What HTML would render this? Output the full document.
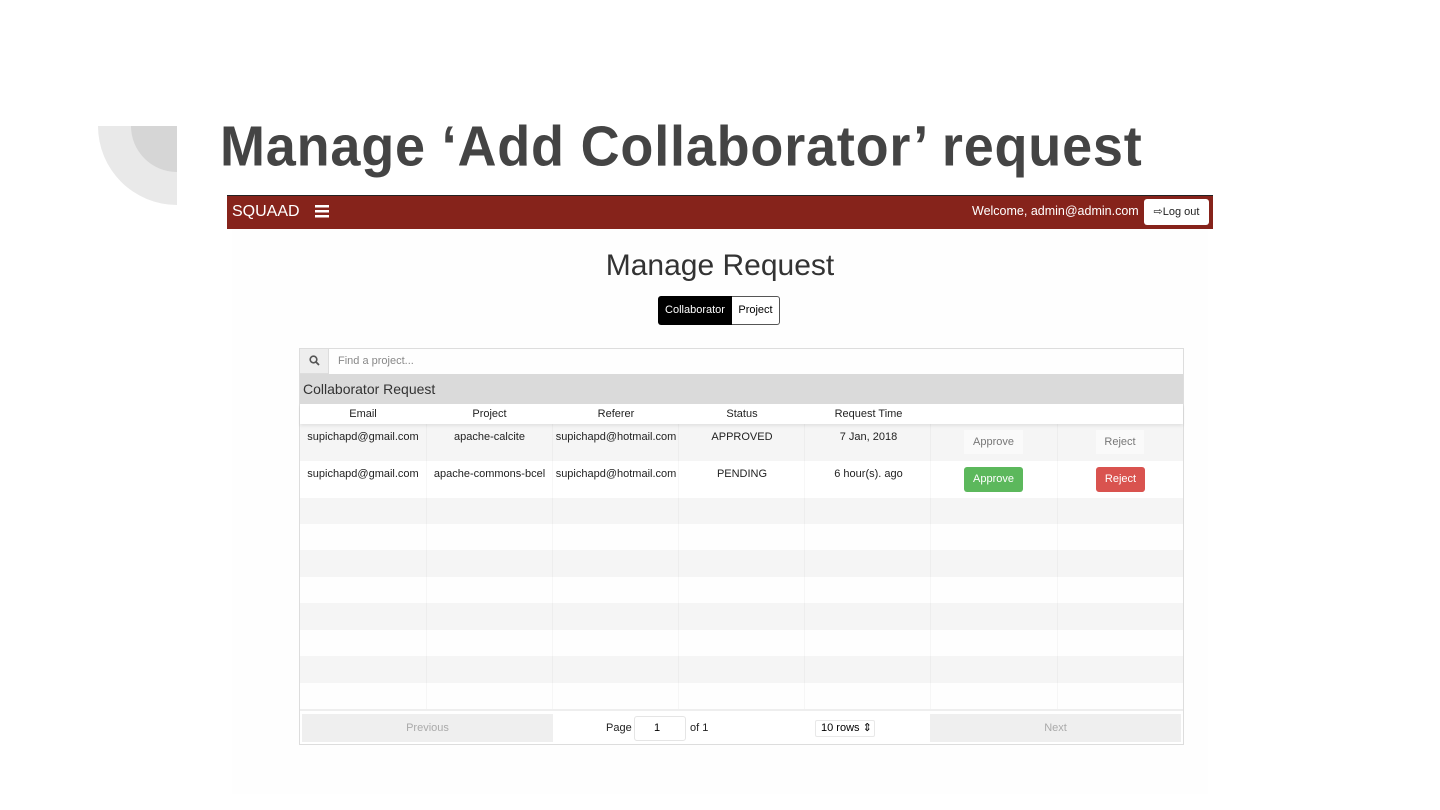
<!DOCTYPE html>
<html><head><meta charset="utf-8"><style>
*{margin:0;padding:0;box-sizing:border-box}
body{width:1440px;height:810px;background:#fff;position:relative;overflow:hidden;font-family:"Liberation Sans",Arial,sans-serif}
.abs{position:absolute}
.title{left:220px;top:114px;font-size:54px;font-weight:bold;color:#444;letter-spacing:0.8px;white-space:nowrap;transform:scaleY(1.05);transform-origin:left top}
.nav{left:227px;top:195px;width:986px;height:34px;background:#86231b;border-top:1px solid #222}
.cell{position:absolute;text-align:center;font-size:11px;color:#222}
.row{position:absolute;left:300px;width:883px}
.vl{position:absolute;top:424px;height:285px;width:1px;background:rgba(0,0,0,0.03)}
</style></head><body>
<svg class="abs" style="left:98px;top:126px" width="80" height="80">
<path d="M0 0 A79 79 0 0 0 79 79 L79 0Z" fill="#e9e9e9"/>
<path d="M33 0 A46 46 0 0 0 79 46 L79 0Z" fill="#d6d6d6"/>
</svg>
<div class="abs title">Manage ‘Add Collaborator’ request</div>
<div class="abs nav">
<div class="abs" style="left:5px;top:7px;color:#fff;font-size:16px">SQUAAD</div>
<svg class="abs" style="left:88px;top:9px" width="14" height="13"><rect y="0" width="14" height="2.5" fill="#fff"/><rect y="5" width="14" height="2.5" fill="#fff"/><rect y="10" width="14" height="2.5" fill="#fff"/></svg>
<div class="abs" style="left:745px;top:8px;color:#fff;font-size:12.5px">Welcome, admin@admin.com</div>
<div class="abs" style="left:917px;top:3px;width:65px;height:26px;background:#fff;border-radius:3px;font-size:11px;color:#222;text-align:center;line-height:26px">⇨Log out</div>
</div>
<div class="abs" style="left:232px;top:229px;width:976px;height:565px;background:#fefefe"></div>
<div class="abs" style="left:0;width:1440px;top:249px;text-align:center;font-size:30px;color:#333">Manage Request</div>
<div class="abs" style="left:658px;top:296px;width:74px;height:29px;background:#000;color:#fff;font-size:11px;line-height:29px;text-align:center;border-radius:3px 0 0 3px">Collaborator</div>
<div class="abs" style="left:732px;top:296px;width:48px;height:29px;background:#fff;color:#000;font-size:11px;line-height:27px;text-align:center;border:1px solid #555;border-left:none;border-radius:0 3px 3px 0">Project</div>
<div class="abs" style="left:299px;top:348px;width:885px;height:397px;border:1px solid #ddd"></div>
<div class="abs" style="left:299px;top:348px;width:30px;height:26px;background:#eee;border:1px solid #ddd;font-size:12px;color:#555;text-align:center;line-height:24px">
<svg width="11" height="11" style="margin-top:6px"><circle cx="4.5" cy="4.5" r="3.3" stroke="#555" stroke-width="1.6" fill="none"/><path d="M7 7 L10 10" stroke="#555" stroke-width="1.8"/></svg></div>
<div class="abs" style="left:338px;top:355px;font-size:11px;color:#888">Find a project...</div>
<div class="row" style="top:374px;height:30px;background:#dadada"><div class="abs" style="left:3px;top:7px;font-size:14px;color:#333">Collaborator Request</div></div>
<div class="row" style="top:404px;height:20px;background:#fff;box-shadow:0 2px 3px rgba(0,0,0,0.08);z-index:2">
<div class="cell" style="left:0;width:126px;top:4px">Email</div>
<div class="cell" style="left:126px;width:127px;top:4px">Project</div>
<div class="cell" style="left:253px;width:126px;top:4px">Referer</div>
<div class="cell" style="left:379px;width:126px;top:4px">Status</div>
<div class="cell" style="left:505px;width:127px;top:4px">Request Time</div>
</div>
<div class="row" style="top:424px;height:37px;background:#f5f5f5">
<div class="cell" style="left:0;width:126px;top:7px">supichapd@gmail.com</div>
<div class="cell" style="left:126px;width:127px;top:7px">apache-calcite</div>
<div class="cell" style="left:253px;width:126px;top:7px">supichapd@hotmail.com</div>
<div class="cell" style="left:379px;width:126px;top:7px">APPROVED</div>
<div class="cell" style="left:505px;width:127px;top:7px">7 Jan, 2018</div>
<div class="abs" style="left:664px;top:6px;width:59px;height:24px;background:#fafafa;color:#777;font-size:11px;text-align:center;line-height:24px">Approve</div>
<div class="abs" style="left:796px;top:6px;width:48px;height:24px;background:#fafafa;color:#777;font-size:11px;text-align:center;line-height:24px">Reject</div>
</div>
<div class="row" style="top:461px;height:37px;background:#fff">
<div class="cell" style="left:0;width:126px;top:7px">supichapd@gmail.com</div>
<div class="cell" style="left:126px;width:127px;top:7px">apache-commons-bcel</div>
<div class="cell" style="left:253px;width:126px;top:7px">supichapd@hotmail.com</div>
<div class="cell" style="left:379px;width:126px;top:7px">PENDING</div>
<div class="cell" style="left:505px;width:127px;top:7px">6 hour(s). ago</div>
<div class="abs" style="left:664px;top:6px;width:59px;height:25px;background:#5cb85c;color:#fff;font-size:11px;text-align:center;line-height:25px;border-radius:3px">Approve</div>
<div class="abs" style="left:796px;top:6px;width:49px;height:25px;background:#d9534f;color:#fff;font-size:11px;text-align:center;line-height:25px;border-radius:3px">Reject</div>
</div>
<div class="row" style="top:498px;height:26px;background:#f5f5f5"></div>
<div class="row" style="top:550px;height:27px;background:#f5f5f5"></div>
<div class="row" style="top:603px;height:27px;background:#f5f5f5"></div>
<div class="row" style="top:656px;height:27px;background:#f5f5f5"></div>
<div class="vl" style="left:426px"></div><div class="vl" style="left:552px"></div><div class="vl" style="left:678px"></div><div class="vl" style="left:804px"></div><div class="vl" style="left:930px"></div><div class="vl" style="left:1057px"></div>
<div class="row" style="top:709px;height:35px;background:#fff;border-top:2px solid #eee">
<div class="abs" style="left:2px;top:3px;width:251px;height:28px;background:#efefef;color:#aaa;font-size:11px;text-align:center;line-height:28px">Previous</div>
<div class="abs" style="left:306px;top:11px;font-size:11px;color:#222">Page</div>
<div class="abs" style="left:334px;top:5px;width:52px;height:25px;border:1px solid #e5e5e5;border-radius:3px;font-size:11px;padding-left:19px;line-height:23px">1</div>
<div class="abs" style="left:390px;top:11px;font-size:11px;color:#222">of 1</div>
<div class="abs" style="left:515px;top:9px;width:60px;height:17px;border:1px solid #e8e8e8;border-radius:2px;font-size:11px;padding-left:5px;line-height:15px">10 rows ⇕</div>
<div class="abs" style="left:630px;top:3px;width:251px;height:28px;background:#efefef;color:#aaa;font-size:11px;text-align:center;line-height:28px">Next</div>
</div>
</body></html>
